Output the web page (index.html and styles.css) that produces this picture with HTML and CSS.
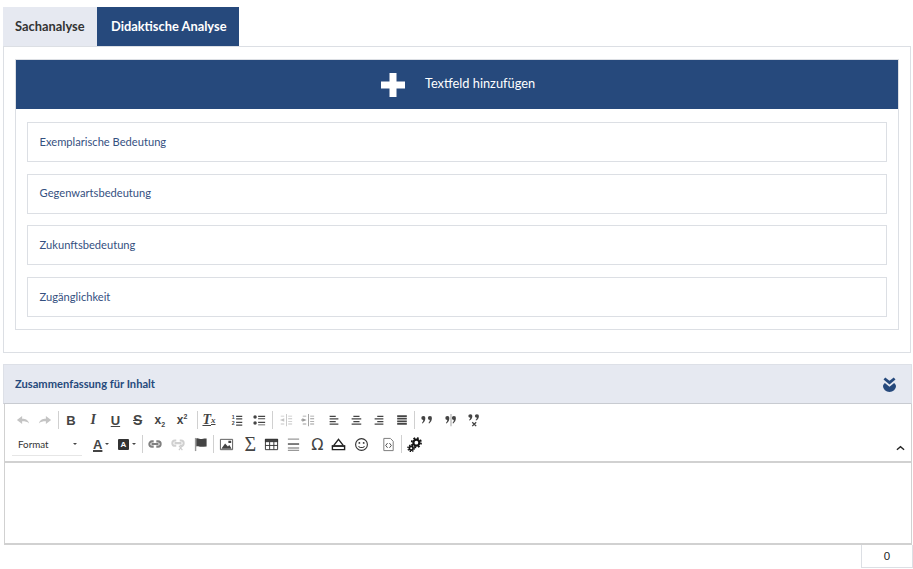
FILE: index.html
```html
<!DOCTYPE html>
<html lang="de">
<head>
<meta charset="utf-8">
<title>Analyse</title>
<link rel="stylesheet" href="styles.css">
</head>
<body>
<main class="page">
  <nav class="tabs">
    <div class="tab">Sachanalyse</div>
    <div class="tab tab-active">Didaktische Analyse</div>
  </nav>
  <section class="panel">
    <div class="inner">
      <div class="add-bar">
        <svg class="plus" viewBox="0 0 24 24"><path d="M8.500 0h7v8.500H24v7h-8.500V24h-7v-8.500H0v-7h8.500z"/></svg>
        <span>Textfeld hinzufügen</span>
      </div>
      <div class="items">
        <div class="item">Exemplarische Bedeutung</div>
        <div class="item">Gegenwartsbedeutung</div>
        <div class="item">Zukunftsbedeutung</div>
        <div class="item">Zugänglichkeit</div>
      </div>
    </div>
  </section>

  <section class="summary">
    <header class="summary-head">
      <span>Zusammenfassung für Inhalt</span>
      <svg class="collapse" viewBox="0 0 14 16"><path d="M1.500 1.500 7 6l5.500-4.500" fill="none" stroke="#26497c" stroke-width="3"/><path d="M2 6.500 7 10.500l5-4c1.500 1.500 2 2.500 2 3.500a7 6 0 0 1-14 0c0-1 .5-2 2-3.500z" fill="#26497c"/></svg>
    </header>
    <div class="editor">
      <div class="toolbar">
        <div class="row">
          <span class="btn"><svg viewBox="0 0 16 16"><path class="off" d="M1 8l6-4.500V6.500c4 0 7 1.500 8 5.500-2-2-4.500-2.500-8-2.500v3z"/></svg></span>
          <span class="btn"><svg viewBox="0 0 16 16"><path class="off" d="M15 8L9 3.500V6.500c-4 0-7 1.500-8 5.500 2-2 4.500-2.500 8-2.500v3z"/></svg></span>
          <i class="sep s1"></i>
          <span class="btn glyph bold">B</span>
          <span class="btn glyph serif-i">I</span>
          <span class="btn glyph under">U</span>
          <span class="btn glyph strike">S</span>
          <span class="btn glyph bold small">x<sub>2</sub></span>
          <span class="btn glyph bold small">x<sup>2</sup></span>
          <i class="sep s2"></i>
          <span class="btn glyph serif-i under tx">T<sub>x</sub></span>
          <span class="btn g1"><svg viewBox="0 0 16 16"><text x="2" y="7" class="tiny">1</text><text x="2" y="14" class="tiny">2</text><path class="on" d="M7 3h7v1.500H7zM7 6h7v1.500H7zM7 10h7v1.500H7zM7 13h7v1.500H7z"/></svg></span>
          <span class="btn"><svg viewBox="0 0 16 16"><circle class="on" cx="3.500" cy="4.500" r="2"/><circle class="on" cx="3.500" cy="11.500" r="2"/><path class="on" d="M7 3h8v1.500H7zM7 6h8v1H7zM7 10h8v1.500H7zM7 13h8v1H7z"/></svg></span>
          <i class="sep s3"></i>
          <span class="btn"><svg viewBox="0 0 16 16"><path class="off" d="M8 1h1v14H8zM10.500 3H15v1h-4.500zM10.500 6H15v1h-4.500zM10.500 9H15v1h-4.500zM10.500 12H15v1h-4.500zM2 3h4v1H2zM2 12h4v1H2zM1 8l5-2v4z"/></svg></span>
          <span class="btn"><svg viewBox="0 0 16 16"><path class="mid" d="M8 1h1v14H8zM10.500 3H15v1h-4.500zM10.500 6H15v1h-4.500zM10.500 9H15v1h-4.500zM10.500 12H15v1h-4.500zM2 3h4v1H2zM2 12h4v1H2zM6.500 8l-5-2v1.500H0v1h1.500V10z"/></svg></span>
          <span class="btn g2"><svg viewBox="0 0 16 16"><path class="on" d="M3 3h7v1.500H3zM3 6h10v1.500H3zM3 9h7v1.500H3zM3 12h10v1.500H3z"/></svg></span>
          <span class="btn"><svg viewBox="0 0 16 16"><path class="on" d="M5 3h7v1.500H5zM3 6h11v1.500H3zM5 9h7v1.500H5zM3 12h11v1.500H3z"/></svg></span>
          <span class="btn wide"><svg viewBox="0 0 16 16"><path class="on" d="M6 3h7v1.500H6zM3 6h10v1.500H3zM6 9h7v1.500H6zM3 12h10v1.500H3z"/></svg></span>
          <span class="btn"><svg viewBox="0 0 16 16"><path class="on" d="M2.500 2.500h11v2h-11zM2.500 5.500h11v2h-11zM2.500 8.500h11v2h-11zM2.500 11.500h11v2h-11z"/></svg></span>
          <i class="sep s4"></i>
          <span class="btn wide"><svg viewBox="0 0 16 16"><path class="on" d="M3.800 3.500a2.300 2.300 0 0 1 2.300 2.600C6 8.500 5 10.500 3 12l-.8-.7c1-1 1.500-2 1.600-3.200a2.300 2.300 0 0 1 0-4.600zM11.300 3.500a2.300 2.300 0 0 1 2.300 2.600c-.1 2.400-1.100 4.400-3.100 5.900l-.8-.7c1-1 1.500-2 1.600-3.200a2.300 2.300 0 0 1 0-4.600z"/></svg></span>
          <span class="btn wide"><svg viewBox="0 0 16 16"><path class="on" d="M3.800 3.500a2.300 2.300 0 0 1 2.300 2.600C6 8.500 5 10.500 3 12l-.8-.7c1-1 1.500-2 1.600-3.200a2.300 2.300 0 0 1 0-4.600zM11.300 3.500a2.300 2.300 0 0 1 2.300 2.600c-.1 2.400-1.100 4.400-3.100 5.900l-.8-.7c1-1 1.500-2 1.600-3.200a2.300 2.300 0 0 1 0-4.600z"/><path class="mid" d="M7.500 1h1v14h-1z"/></svg></span>
          <span class="btn"><svg viewBox="0 0 16 16"><g transform="translate(0 -1.500) scale(1 .85)"><path class="on" d="M3.800 3.500a2.300 2.300 0 0 1 2.300 2.600C6 8.500 5 10.500 3 12l-.8-.7c1-1 1.500-2 1.600-3.200a2.300 2.300 0 0 1 0-4.600zM11.300 3.500a2.300 2.300 0 0 1 2.300 2.600c-.1 2.400-1.100 4.400-3.100 5.900l-.8-.7c1-1 1.500-2 1.600-3.200a2.300 2.300 0 0 1 0-4.600z"/></g><path d="M6 10.500l4.500 4.500M10.500 10.500 6 15" stroke="#444" stroke-width="1.500"/></svg></span>
        </div>
        <div class="row row-two">
          <span class="combo"><span>Format</span><b class="caret"></b></span>
          <span class="color"><span class="glyph bold under-a">A</span><b class="caret"></b></span>
          <span class="color"><span class="a-box">A</span><b class="caret"></b></span>
          <i class="sep s5"></i>
          <span class="btn b2"><svg viewBox="0 0 16 16"><path d="M6.500 5H4.500a3 3 0 0 0 0 6h2M9.500 5h2a3 3 0 0 1 0 6h-2M4 8h8" fill="none" stroke="#808080" stroke-width="2.300"/></svg></span>
          <span class="btn b2"><svg viewBox="0 0 16 16"><path d="M6 4H4.500a3 3 0 0 0 0 6H6M10 4h1.500a3 3 0 0 1 0 6H10M4 7h8" fill="none" stroke="#d0d0d0" stroke-width="2.300"/><path d="M9 10l4 5M13 10l-4 5" stroke="#ccc" stroke-width="1.300"/></svg></span>
          <span class="btn b2"><svg class="flag" viewBox="0 0 16 16"><path d="M2 1h1.500v14H2z" fill="#999"/><path class="on" d="M3.500 1.500c2-1 4 1 6 .5s3-.5 5-.5v8.500c-2 0-4 .5-6 .5s-3-1-5-.5z"/></svg></span>
          <i class="sep s6"></i>
          <span class="btn b3"><svg viewBox="0 0 16 16"><path d="M1.500 2.500h13v11h-13z" fill="#fff" stroke="#555"/><path class="on" d="M2.500 12.500 6.500 7l3 3 1.500-1.500 2.500 4zM10 4h3v2.500h-3z"/></svg></span>
          <span class="btn b3 glyph sigma">Σ</span>
          <span class="btn b3"><svg viewBox="0 0 16 16"><path class="on" d="M1 2h14v3.500H1z"/><path d="M1.500 2.500h13v11h-13zM1.500 9h13M6 5v8.500M10.500 5v8.500" fill="none" stroke="#333"/></svg></span>
          <span class="btn b3"><svg viewBox="0 0 16 16"><path d="M2 1.500h12V3H2zM2 11h12v1.500H2zM2 13.500h12V15H2z" fill="#999"/><path d="M2 6.500h12v2H2z" fill="#777"/></svg></span>
          <span class="btn b3 glyph omega">Ω</span>
          <span class="btn b3"><svg viewBox="0 0 16 16"><path d="M1.500 9.500h13v4h-13z" fill="none" stroke="#222" stroke-width="1.500"/><path d="M3 9 8 2.500 13 9" fill="none" stroke="#222" stroke-width="1.500"/><path d="M1 9h14v1.500H1z" fill="#222"/></svg></span>
          <span class="btn b3"><svg viewBox="0 0 16 16"><circle cx="8" cy="8" r="6.300" fill="none" stroke="#333" stroke-width="1.200"/><circle cx="5.700" cy="6.300" r="1" fill="#333"/><circle cx="10.300" cy="6.300" r="1" fill="#333"/><path d="M4.800 9.800c1.500 2 5 2 6.400 0" fill="none" stroke="#333" stroke-width="1.100"/></svg></span>
          <span class="btn b3 g3"><svg viewBox="0 0 16 16"><path d="M3 1.500h7L13 4.500v10H3z" fill="#fff" stroke="#777"/><path d="M7 6.500 5 9l2 2.500M9 6.500 11 9l-2 2.500" fill="none" stroke="#444"/></svg></span>
          <i class="sep s7"></i>
          <span class="btn b3"><svg viewBox="0 0 16 16"><circle cx="10" cy="6" r="3.200" fill="none" stroke="#111" stroke-width="2.400"/><circle cx="10" cy="6" r="5" fill="none" stroke="#111" stroke-width="1.800" stroke-dasharray="2 1.930"/><circle cx="4.500" cy="12" r="2" fill="none" stroke="#111" stroke-width="1.800"/><circle cx="4.500" cy="12" r="3.500" fill="none" stroke="#111" stroke-width="1.400" stroke-dasharray="1.500 1.250"/></svg></span>
          <svg class="chev" viewBox="0 0 10 6"><path d="M1 5l4-3.500L9 5" fill="none" stroke="#222" stroke-width="1.500"/></svg>
        </div>
      </div>
      <div class="edit-area"></div>
    </div>
    <div class="counter-row"><div class="counter">0</div></div>
  </section>
</main>
</body>
</html>
```
FILE: styles.css
```css
* { box-sizing: border-box; }
html, body { margin: 0; height: 100%; overflow: hidden; background: #fff; }
body { font-family: Lato, "Open Sans", sans-serif; color: #26497c; }
.page { padding: 7px 1px 0 3px; width: 913px; }

.tabs { display: flex; height: 39px; }
.tab { display: flex; align-items: center; width: 94px; padding: 0 0 2px 12px; background: #e6e9f1; color: #333; font-size: 12.850px; font-weight: 700; }
.tab-active { width: 142px; background: #26497c; color: #fff; padding: 0 0 2px 14px; }

.panel { border: 1px solid #dcdfe4; border-top: 1px solid #dcdfe4; height: 307px; margin-right: 1px; padding: 12px 11px 0; }
.inner { border: 1px solid #dcdfe4; height: 271px; }
.add-bar { display: flex; align-items: center; justify-content: center; gap: 20px; height: 49px; padding: 0 0 3px 2px; background: #26497c; color: #fff; font-size: 12.800px; }
.plus { width: 24px; height: 24px; fill: #fff; margin-top: 3px; }
.items { display: flex; flex-direction: column; gap: 11.670px; padding: 13px 11px 0; }
.item { display: flex; align-items: center; height: 40px; padding: 0 12px 1.500px 11.600px; border: 1px solid #dcdfe4; font-size: 11.150px; color: #35507f; }

.summary { margin-top: 11px; }
.summary-head { display: flex; align-items: center; justify-content: space-between; height: 40px; padding: 0 15px 2px 11px; background: #e6e9f1; border: 1px solid #dde0e7; border-bottom: 1px solid #c8cbd1; font-size: 11.150px; font-weight: 700; color: #26497c; }
.collapse { width: 13px; height: 15px; margin-top: 2px; }

.editor { border: 1px solid #d1d1d1; border-top: 0; border-bottom-width: 2px; margin-left: 1px; }
.toolbar { height: 59px; padding: 5px 0 0 7px; border-bottom: 2px solid #d1d1d1; background: #fff; position: relative; }
.row { display: flex; align-items: center; height: 22px; }
.row-two { height: 24px; margin-top: 1px; }
.btn { display: flex; align-items: center; justify-content: center; flex: none; width: 22.200px; height: 18px; color: #333; }
.btn svg { width: 14px; height: 14px; display: block; }
.btn .flag { width: 15px; height: 15px; }
.wide { width: 23.400px; }
.b2 { width: 23px; }
.b3 { width: 22.500px; }
.b3 svg { width: 15px; height: 15px; }
.g1 { margin-left: 5.800px; }
.g2 { margin-left: 3.600px; }
.g3 { margin-left: 4.500px; }
.sep { display: block; flex: none; width: 1px; height: 18px; background: #d0d0d0; }
.s1 { margin: 0 1px 0 1.600px; }
.s2 { margin: 0 0 0 3.800px; }
.s3 { margin: 0 2px 0 1.600px; }
.s4 { margin: 0 1px 0 1px; }
.s5 { margin: 0 0 0 2px; }
.s6 { margin: 0 1px 0 1px; }
.s7 { margin: 0 2px 0 1px; }
.off { fill: #c4c4c4; }
.mid { fill: #999; }
.on { fill: #444; }
.tiny { font: 700 6px "Liberation Sans", sans-serif; fill: #444; }
.glyph { font-family: "Liberation Sans", sans-serif; font-size: 13px; color: #444; }
.bold { font-weight: 700; }
.small { font-size: 12px; line-height: 18px; display: block; text-align: center; }
.small sub, .small sup { font-size: 7px; line-height: 0; position: static; }
.small sub { vertical-align: -3px; }
.small sup { vertical-align: 5px; }
.serif-i { font-family: "Liberation Serif", serif; font-style: italic; font-weight: 700; font-size: 14px; }
.under { font-weight: 700; text-decoration: underline; }
.strike { font-weight: 700; font-size: 14px; text-decoration: line-through; }
.tx { text-decoration: underline; }
.tx sub { font-size: 9px; text-decoration: none; display: inline-block; }
.sigma { font-size: 20px; font-family: "Liberation Serif", serif; padding-left: 3px; }
.omega { font-size: 16px; font-family: "DejaVu Sans", sans-serif; padding-left: 2px; }

.combo { display: flex; align-items: center; justify-content: space-between; flex: none; width: 70px; height: 24px; padding: 0 5px 0 6px; border-bottom: 1px solid #e6e6e6; font-family: Lato, sans-serif; font-size: 9.800px; color: #333; margin-right: 8px; }
.caret { display: inline-block; width: 0; height: 0; border: 2px solid transparent; border-top: 2px solid #444; border-bottom: 0; }
.color { display: flex; align-items: center; gap: 3px; flex: none; width: 25px; height: 18px; padding-left: 3px; }
.under-a { text-decoration: underline; text-decoration-thickness: 2px; text-underline-offset: 1px; }
.a-box { display: block; width: 11px; height: 11px; background: #333; color: #fff; font: 700 8px/11px "Liberation Sans", sans-serif; text-align: center; border-radius: 1px; }
.chev { position: absolute; right: 6px; top: 41px; width: 9px; height: 6px; }

.edit-area { height: 80px; background: #fff; }
.counter-row { display: flex; justify-content: flex-end; margin-right: -1px; }
.counter { display: flex; align-items: center; justify-content: center; width: 52px; height: 23px; border: 1px solid #dcdfe4; border-top: 0; font-size: 11.500px; color: #222; font-family: "Liberation Sans", sans-serif; }
```
